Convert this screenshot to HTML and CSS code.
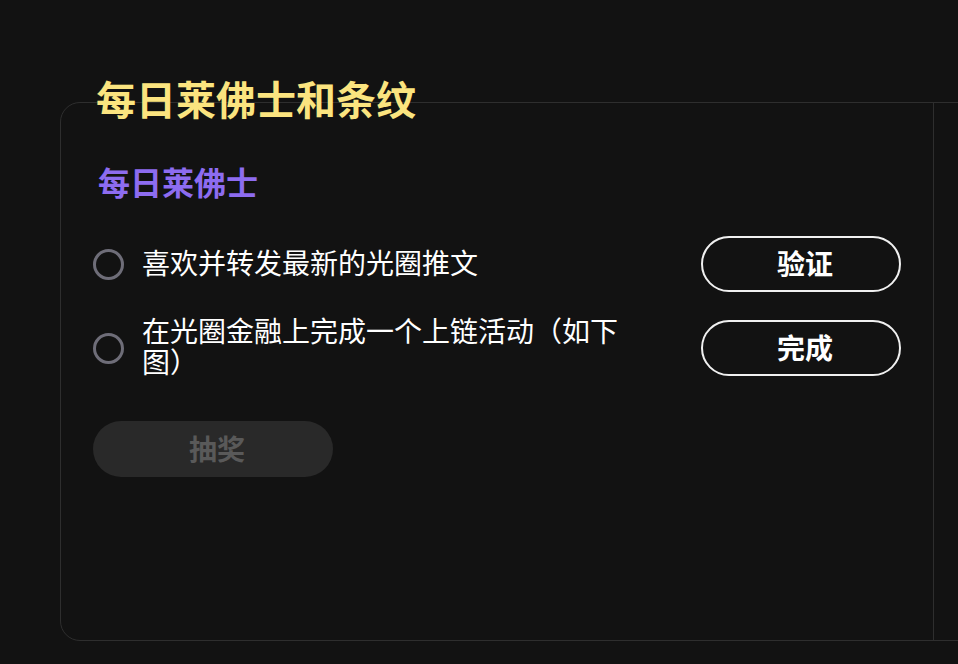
FILE: index.html
```html
<!DOCTYPE html>
<html lang="zh-CN">

<head>
    <meta charset="UTF-8">
    <title>每日莱佛士和条纹</title>
    <link rel="stylesheet" href="styles.css">
</head>

<body>
    <div class="page">
        <h1 class="title">每日莱佛士和条纹</h1>

        <div class="card">
            <div class="tasks">
                <h2 class="subtitle">每日莱佛士</h2>

                <div class="task">
                    <span class="radio"></span>
                    <span class="task-text">喜欢并转发最新的光圈推文</span>
                    <button class="btn-outline">验证</button>
                </div>

                <div class="task">
                    <span class="radio"></span>
                    <span class="task-text">在光圈金融上完成一个上链活动（如下图）</span>
                    <button class="btn-outline">完成</button>
                </div>

                <button class="btn-draw" disabled>抽奖</button>
            </div>
            <div class="side"></div>
        </div>
    </div>
</body>

</html>
```

FILE: styles.css
```css
body {
    font-family: "Noto Sans CJK SC", "Noto Sans", sans-serif;
    background-color: #121212;
    color: #fff;
    margin: 0;
    padding: 0;
    height: 100vh;
    overflow: hidden;
}

.page {
    padding: 74px 0 0 60px;
}

.title {
    position: relative;
    z-index: 1;
    margin: 0 0 -20px 36px;
    font-size: 40px;
    line-height: 48px;
    font-weight: 700;
    color: #fbe47f;
}

.card {
    display: grid;
    grid-template-columns: 873px 1fr;
    width: 1000px;
    height: 539px;
    box-sizing: border-box;
    border: 1px solid #2e2e2e;
    border-radius: 20px 0 0 20px;
}

.tasks {
    border-right: 1px solid #2e2e2e;
    padding: 57px 33px 0 32px;
}

.subtitle {
    margin: 0 0 34px 5px;
    font-size: 32px;
    line-height: 42px;
    font-weight: 700;
    color: #8d6cf0;
}

.task {
    display: flex;
    align-items: center;
    margin-bottom: 23px;
}

.radio {
    width: 31px;
    height: 31px;
    box-sizing: border-box;
    border: 3px solid #6e6d78;
    border-radius: 50%;
    flex-shrink: 0;
}

.task-text {
    width: 490px;
    margin-left: 18px;
    padding-bottom: 4px;
    font-size: 28px;
    line-height: 31px;
}

.btn-outline {
    margin-left: auto;
    margin-right: -1px;
    width: 200px;
    height: 56px;
    padding: 0 0 3px 8px;
    border: 2px solid #f0f0f0;
    border-radius: 28px;
    background: transparent;
    color: #fff;
    font-family: inherit;
    font-size: 28px;
    font-weight: 700;
    cursor: pointer;
}

.btn-draw {
    margin-top: 17px;
    width: 240px;
    height: 56px;
    padding: 0 0 3px 8px;
    border: none;
    border-radius: 28px;
    background-color: #292929;
    color: #595959;
    font-family: inherit;
    font-size: 28px;
    font-weight: 700;
}
```
